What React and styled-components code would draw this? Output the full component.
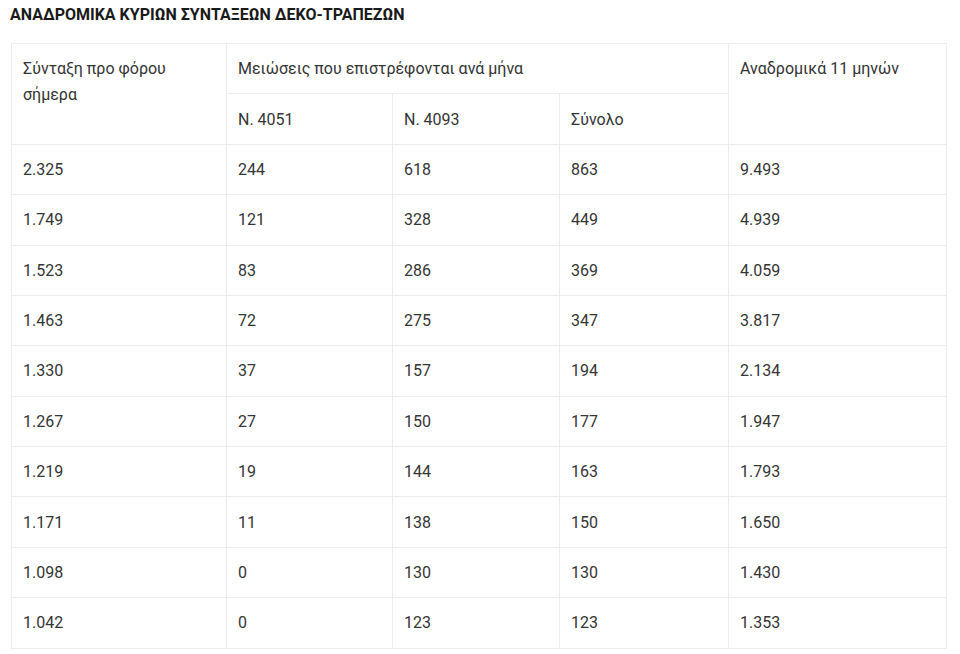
import React from 'react';
import styled, { createGlobalStyle } from 'styled-components';

const rows = [
  ['2.325', '244', '618', '863', '9.493'],
  ['1.749', '121', '328', '449', '4.939'],
  ['1.523', '83', '286', '369', '4.059'],
  ['1.463', '72', '275', '347', '3.817'],
  ['1.330', '37', '157', '194', '2.134'],
  ['1.267', '27', '150', '177', '1.947'],
  ['1.219', '19', '144', '163', '1.793'],
  ['1.171', '11', '138', '150', '1.650'],
  ['1.098', '0', '130', '130', '1.430'],
  ['1.042', '0', '123', '123', '1.353'],
];

const GlobalStyle = createGlobalStyle`
  body {
    margin: 0;
    background: #fff;
    font-family: Roboto, "Liberation Sans", Arial, sans-serif;
    color: #333;
  }
`;

const Page = styled.div`
  padding: 5px 15px 0 10px;
`;

const Title = styled.h4`
  margin: 0 0 19px;
  font-size: 16px;
  line-height: 19px;
  font-weight: 700;
  color: #1a1a1a;
`;

const Table = styled.table`
  width: 935px;
  margin-left: 1px;
  border-collapse: collapse;
  table-layout: fixed;
  font-size: 16px;
`;

const Cell = styled.td`
  border: 1px solid #ececec;
  padding: 12.2px 11px 11.2px;
  line-height: 26px;
  vertical-align: top;
  text-align: left;
  font-weight: 400;
  color: #353535;
`;

const widths = [215, 166, 167, 169, 218];

export default function App() {
  return (
    <Page>
      <GlobalStyle />
      <Title>ΑΝΑΔΡΟΜΙΚΑ ΚΥΡΙΩΝ ΣΥΝΤΑΞΕΩΝ ΔΕΚΟ-ΤΡΑΠΕΖΩΝ</Title>
      <Table>
        <colgroup>
          {widths.map((w, i) => (
            <col key={i} style={{ width: w }} />
          ))}
        </colgroup>
        <tbody>
          <tr>
            <Cell as="th" rowSpan={2}>Σύνταξη προ φόρου σήμερα</Cell>
            <Cell as="th" colSpan={3}>Μειώσεις που επιστρέφονται ανά μήνα</Cell>
            <Cell as="th" rowSpan={2}>Αναδρομικά 11 μηνών</Cell>
          </tr>
          <tr>
            <Cell as="th">Ν. 4051</Cell>
            <Cell as="th">Ν. 4093</Cell>
            <Cell as="th">Σύνολο</Cell>
          </tr>
          {rows.map((r, i) => (
            <tr key={i}>
              {r.map((v, j) => (
                <Cell key={j}>{v}</Cell>
              ))}
            </tr>
          ))}
        </tbody>
      </Table>
    </Page>
  );
}
